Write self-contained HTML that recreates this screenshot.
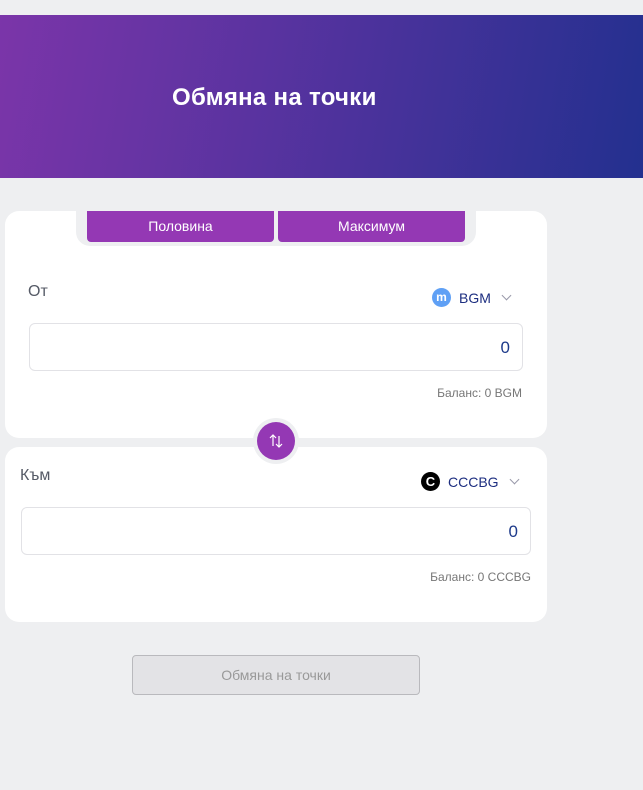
<!DOCTYPE html>
<html><head><meta charset="utf-8"><style>
*{box-sizing:border-box;margin:0;padding:0}
body{width:643px;height:790px;background:#eeeff1;font-family:"Liberation Sans",sans-serif;position:relative;overflow:hidden}
.hdr{position:absolute;left:0;top:15px;width:643px;height:163px;background:linear-gradient(100deg,#7b35a9 0%,#5a33a0 40%,#23308f 100%)}
.hdr h1{position:absolute;left:172px;top:69px;color:#fff;font-size:24px;font-weight:bold;letter-spacing:0.3px}
.card{position:absolute;left:5px;width:542px;background:#fff;border-radius:14px}
.notch{position:absolute;left:71px;top:0;width:400px;height:35px;background:#eeeff1;border-radius:0 0 14px 14px}
.b{position:absolute;top:0;height:31px;background:#9438b4;color:#fff;font-size:14px;text-align:center;line-height:31px;border-radius:0 0 4px 4px}
.lbl{position:absolute;color:#555a66;font-size:16px}
.inp{position:absolute;height:48px;border:1px solid #e2e2e6;border-radius:6px;text-align:right;padding-right:12px;line-height:48px;color:#1d3a8a;font-size:17px}
.bal{position:absolute;color:#777;font-size:12px;text-align:right}
.tok{position:absolute;font-size:14px;color:#1d2e80;display:flex;align-items:center}
.chev{margin-left:12px;width:7px;height:7px;border-right:1.3px solid #99a;border-bottom:1.3px solid #99a;transform:rotate(45deg);margin-top:-5px}
</style></head><body>
<div class="hdr"><h1>Обмяна на точки</h1></div>
<div class="card" style="top:211px;height:227px">
 <div class="notch"></div>
 <div class="b" style="left:82px;width:187px">Половина</div>
 <div class="b" style="left:273px;width:187px">Максимум</div>
 <div class="lbl" style="left:23px;top:72px">От</div>
 <div class="tok" style="left:427px;top:77px"><span style="width:19px;height:19px;border-radius:50%;background:#5fa0f5;color:#fff;font-size:12px;font-weight:bold;text-align:center;line-height:19px;margin-right:8px">m</span>BGM<span class="chev"></span></div>
 <div class="inp" style="left:24px;top:112px;width:494px">0</div>
 <div class="bal" style="right:25px;top:175px">Баланс: 0 BGM</div>
</div>
<div class="card" style="top:447px;height:175px">
 <div class="lbl" style="left:15px;top:20px">Към</div>
 <div class="tok" style="left:416px;top:25px"><span style="width:19px;height:19px;border-radius:50%;background:#000;color:#fff;font-size:13px;font-weight:bold;text-align:center;line-height:19px;margin-right:8px">C</span>CCCBG<span class="chev"></span></div>
 <div class="inp" style="left:16px;top:60px;width:510px">0</div>
 <div class="bal" style="right:16px;top:123px">Баланс: 0 CCCBG</div>
</div>
<div style="position:absolute;left:253px;top:418px;width:46px;height:46px;border-radius:50%;background:#eeeff1"></div>
<div style="position:absolute;left:257px;top:422px;width:38px;height:38px;border-radius:50%;background:#9438b4">
<svg width="38" height="38" viewBox="0 0 38 38"><g stroke="#fff" stroke-width="1.2" fill="none"><path d="M16 24V13M13 16l3-3 3 3"/><path d="M22 14v11M19 22l3 3 3-3"/></g></svg></div>
<div style="position:absolute;left:132px;top:655px;width:288px;height:40px;background:#e3e3e6;border:1px solid #b9b9bd;border-radius:4px;text-align:center;line-height:38px;color:#999;font-size:14px">Обмяна на точки</div>
</body></html>
